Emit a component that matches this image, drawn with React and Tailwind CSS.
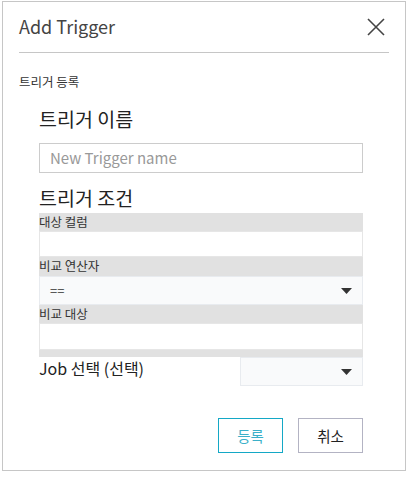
import React from "react";

const font = { fontFamily: '"Noto Sans CJK KR", "Noto Sans", sans-serif' };

function Caret() {
  return (
    <svg width="11" height="6" viewBox="0 0 11 6" className="block">
      <path d="M0 0 L11 0 L5.5 6 Z" fill="#333" />
    </svg>
  );
}

export default function App() {
  return (
    <div className="pt-[1px] pl-[2px] bg-white" style={font}>
      <div className="w-[404px] h-[470px] border border-[#c6c6c6] bg-white flex flex-col">
        {/* Header */}
        <div className="h-[50px] px-4 pb-[3px] flex items-center justify-between">
          <span className="text-[18px] text-[#444] leading-none">Add Trigger</span>
          <svg width="18" height="18" viewBox="0 0 18 18" className="mr-[4px] mt-[2px]">
            <path d="M1 1 L17 17 M17 1 L1 17" stroke="#444" strokeWidth="1.6" />
          </svg>
        </div>
        <div className="mx-4 border-b border-[#c6c6c6]" />

        <div className="h-[54px] px-4 pt-[5px] flex items-center text-[12.5px] text-[#333]">트리거 등록</div>

        <div className="pl-[36px] w-[360px] flex flex-col">
          <div className="h-[24px] flex items-center text-[19.5px] text-[#222]">트리거 이름</div>
          <div className="mt-[12px] h-[30px] border border-[#cccccc] flex items-center px-[10px] text-[15px] text-[#999]">
            New Trigger name
          </div>
          <div className="mt-[13px] h-[24px] flex items-center text-[19.5px] text-[#222]">트리거 조건</div>

          <div className="mt-[3px] bg-[#e1e1e1] flex flex-col pb-[7px]">
            <div className="h-[18px] flex items-center text-[12.5px] text-[#333]">대상 컬럼</div>
            <div className="h-[26px] bg-white border border-[#e6e6e6]" />
            <div className="h-[19px] flex items-center text-[12.5px] text-[#333]">비교 연산자</div>
            <div className="h-[29px] bg-[#f9fafb] border border-[#e8ebef] flex items-center justify-between pl-[10px] pr-[10px] text-[13px] text-[#333]">
              <span>==</span>
              <Caret />
            </div>
            <div className="h-[18px] flex items-center text-[12.5px] text-[#333]">비교 대상</div>
            <div className="h-[27px] bg-white border border-[#e6e6e6]" />
          </div>

          <div className="flex justify-between items-start">
            <span className="text-[16px] text-[#222] leading-[22px]">Job 선택 (선택)</span>
            <div className="w-[123px] h-[29px] bg-[#f9fafb] border border-[#e8ebef] flex items-center justify-end pr-[10px]">
              <Caret />
            </div>
          </div>

          <div className="mt-[32px] flex justify-end gap-[15px]">
            <button className="w-[65px] h-[35px] border border-[#14a8c6] text-[#3bb0c9] text-[14.5px] bg-white">등록</button>
            <button className="w-[65px] h-[35px] border border-[#b3b3c3] text-[#222] text-[14.5px] bg-white">취소</button>
          </div>
        </div>
      </div>
    </div>
  );
}
